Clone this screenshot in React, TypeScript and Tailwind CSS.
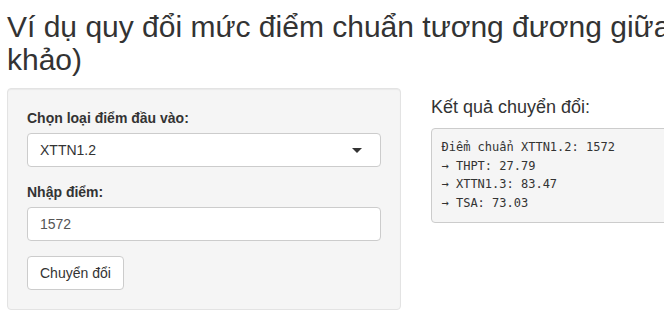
const results = [
  'Điểm chuẩn XTTN1.2: 1572',
  '→ THPT: 27.79',
  '→ XTTN1.3: 83.47',
  '→ TSA: 73.03',
];

function Caret() {
  return (
    <span className="absolute right-[18px] top-1/2 -mt-[2px] h-0 w-0 border-x-[5px] border-t-[5px] border-x-transparent border-t-[#333]" />
  );
}

export default function App() {
  return (
    <div
      className="w-[664px] h-[325px] overflow-hidden bg-white text-[#333] text-[14px] leading-[20px]"
      style={{ fontFamily: '"Liberation Sans", Arial, sans-serif' }}
    >
      <div className="pl-[7px] pt-[10px]">
        {/* Title */}
        <h2 className="w-[1000px] text-[30px] leading-[33px] font-normal text-[#333] whitespace-nowrap">
          Ví dụ quy đổi mức điểm chuẩn tương đương giữa các kỳ thi (tham
          <br />
          khảo)
        </h2>

        <div className="mt-[12px] flex gap-[30px]">
          {/* Sidebar well */}
          <div className="w-[394px] shrink-0 rounded-[4px] border border-[#e3e3e3] bg-[#f5f5f5] p-[19px] shadow-[inset_0_1px_1px_rgba(0,0,0,0.05)]">
            <div className="mb-[15px]">
              <label className="mb-[5px] block font-bold">Chọn loại điểm đầu vào:</label>
              <div className="relative h-[34px] rounded-[4px] border border-[#ccc] bg-white px-[12px] py-[6px] leading-[20px]">
                XTTN1.2
                <Caret />
              </div>
            </div>

            <div className="mb-[15px]">
              <label className="mb-[5px] block font-bold">Nhập điểm:</label>
              <div className="h-[34px] rounded-[4px] border border-[#ccc] bg-white px-[12px] py-[6px] leading-[20px] text-[#555]">
                1572
              </div>
            </div>

            <button className="h-[34px] rounded-[4px] border border-[#ccc] bg-white px-[12px] py-[6px] leading-[20px] text-[#333]">
              Chuyển đổi
            </button>
          </div>

          {/* Result */}
          <div className="w-[300px] shrink-0">
            <h4 className="mt-[10px] mb-[10px] text-[18px] leading-[19.8px] font-normal">
              Kết quả chuyển đổi:
            </h4>
            <pre
              className="rounded-[4px] border border-[#ccc] bg-[#f5f5f5] p-[9.5px] text-[12px] leading-[18.5px] text-[#333]"
              style={{ fontFamily: '"DejaVu Sans Mono", "Liberation Mono", monospace' }}
            >
              {results.join('\n')}
            </pre>
          </div>
        </div>
      </div>
    </div>
  );
}
